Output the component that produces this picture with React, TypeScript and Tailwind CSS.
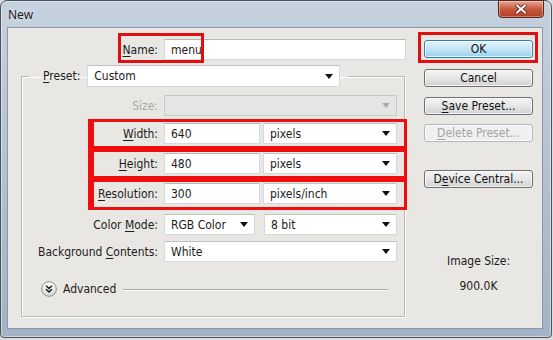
const font = "font-['DejaVu_Sans_Condensed','DejaVu_Sans',sans-serif]";

const Arrow = ({ disabled }: { disabled?: boolean }) => (
  <svg width="8" height="5" viewBox="0 0 8 5" className="flex-shrink-0">
    <path d="M0 0h8L4 5z" fill={disabled ? '#a9a9a9' : '#111'} />
  </svg>
);

function TextBox({ value, className = '' }: { value: string; className?: string }) {
  return (
    <div
      className={`h-[21px] bg-white border border-[#d5d8dc] border-t-[#b5b8bd] flex items-center pl-[6px] ${className}`}
    >
      {value}
    </div>
  );
}

function Select({
  value,
  className = '',
  disabled,
}: {
  value?: string;
  className?: string;
  disabled?: boolean;
}) {
  return (
    <div
      className={`h-[21px] border flex items-center justify-between pl-[6px] pr-[6px] ${
        disabled ? 'bg-[#e6e5e3] border-[#c9c9c9]' : 'bg-white border-[#d5d8dc] border-t-[#bfc2c6]'
      } ${className}`}
    >
      <span>{value}</span>
      <Arrow disabled={disabled} />
    </div>
  );
}

function Label({ children, className = '' }: { children: React.ReactNode; className?: string }) {
  return <div className={`text-right whitespace-nowrap ${className}`}>{children}</div>;
}

function Button({
  children,
  primary,
  disabled,
  className = '',
}: {
  children: React.ReactNode;
  primary?: boolean;
  disabled?: boolean;
  className?: string;
}) {
  const look = primary
    ? 'border-[#3c7fb1] bg-gradient-to-b from-[#e5f4fc] via-[#c4e5f6] to-[#98d1ef] text-[#111]'
    : disabled
      ? 'border-[#b4b8bc] bg-[#f0f0f0] text-[#a3a3a3]'
      : 'border-[#707070] bg-gradient-to-b from-[#f4f4f4] via-[#e6e6e6] to-[#d2d2d2] text-[#111]';
  return (
    <div
      className={`h-[18px] rounded-[3px] border flex items-center justify-center shadow-[inset_0_0_0_1px_rgba(255,255,255,0.7)] ${look} ${className}`}
    >
      {children}
    </div>
  );
}

const U = ({ c }: { c: string }) => <span className="underline underline-offset-2">{c}</span>;

function AdvancedIcon() {
  return (
    <svg width="16" height="16" viewBox="0 0 16 16" className="flex-shrink-0">
      <defs>
        <linearGradient id="adv" x1="0" y1="0" x2="0" y2="1">
          <stop offset="0" stopColor="#ffffff" />
          <stop offset="1" stopColor="#d8d8d8" />
        </linearGradient>
      </defs>
      <circle cx="8" cy="8" r="7.3" fill="url(#adv)" stroke="#8c8c8c" strokeWidth="1" />
      <path d="M5 4.8l3 2.6 3-2.6M5 8.3l3 2.6 3-2.6" fill="none" stroke="#222" strokeWidth="1.5" />
    </svg>
  );
}

export default function App() {
  return (
    <div className={`w-[553px] h-[340px] bg-[#dcdcdc] text-[12px] text-[#1b1b1b] ${font}`}>
      <div className="w-[552px] h-[338px] rounded-t-[7px] rounded-b-[4px] border border-[#46525f] bg-gradient-to-b from-[#c6d1de] via-[#b4c1d1] to-[#a3b2c4] flex flex-col shadow-[inset_0_0_0_1px_rgba(255,255,255,0.45)]">
        {/* title bar */}
        <div className="h-[26px] flex items-start justify-between relative">
          <div className="pl-[7px] pt-[5px] text-[12px] text-[#1e1e1e] font-['Noto_Sans',sans-serif] [text-shadow:0_0_8px_#ffffff]">
            New
          </div>
          <div className="mr-[7px] -mt-px w-[46px] h-[18px] rounded-b-[4px] border border-[#5a2418] bg-gradient-to-b from-[#e6a594] via-[#c75a3e] to-[#b33e22] flex items-center justify-center shadow-[inset_0_0_0_1px_rgba(255,255,255,0.35)]">
            <svg width="12" height="10" viewBox="0 0 12 10">
              <path d="M2 1.5l8 7M10 1.5l-8 7" stroke="#4a1a10" strokeWidth="3.4" strokeLinecap="square" />
              <path d="M2 1.5l8 7M10 1.5l-8 7" stroke="#ffffff" strokeWidth="2" strokeLinecap="square" />
            </svg>
          </div>
        </div>

        {/* client area */}
        <div className="relative ml-[6px] mr-[8px] w-[536px] h-[302px] bg-[#e9e7e4] border border-[#8b98a8] flex pt-[11px]">
          {/* left form */}
          <div className="w-[398px] flex flex-col">
            <div className="h-[21px] flex items-center">
              <Label className="w-[150px]">
                <U c="N" />ame:
              </Label>
              <TextBox value="menu" className="ml-[6px] flex-1" />
            </div>

            <fieldset className="mt-[5px] ml-[13px] w-[384px] border border-[#b9b7b4] shadow-[inset_1px_1px_0_#ffffff,1px_1px_0_#ffffff] pb-[19px]">
              <legend className="ml-[7px] pl-[14px] pr-[8px] flex items-center">
                <span>
                  <U c="P" />reset:
                </span>
                <Select value="Custom" className="ml-[7px] w-[253px] h-[22px]" />
              </legend>

              <div className="mt-[8px] flex items-center">
                <Label className="w-[136px] text-[#a8a8a8]">Size:</Label>
                <Select disabled className="ml-[6px] w-[233px]" />
              </div>

              <div className="mt-[7px] flex items-center">
                <Label className="w-[136px]">
                  <U c="W" />idth:
                </Label>
                <TextBox value="640" className="ml-[6px] w-[96px]" />
                <Select value="pixels" className="ml-[3px] w-[134px]" />
              </div>

              <div className="mt-[9px] flex items-center">
                <Label className="w-[136px]">
                  <U c="H" />eight:
                </Label>
                <TextBox value="480" className="ml-[6px] w-[96px]" />
                <Select value="pixels" className="ml-[3px] w-[134px]" />
              </div>

              <div className="mt-[9px] flex items-center">
                <Label className="w-[136px]">
                  <U c="R" />esolution:
                </Label>
                <TextBox value="300" className="ml-[6px] w-[96px]" />
                <Select value="pixels/inch" className="ml-[3px] w-[134px]" />
              </div>

              <div className="mt-[10px] flex items-center">
                <Label className="w-[136px]">
                  Color <U c="M" />ode:
                </Label>
                <Select value="RGB Color" className="ml-[6px] w-[91px]" />
                <Select value="8 bit" className="ml-[9px] w-[133px]" />
              </div>

              <div className="mt-[6px] flex items-center">
                <Label className="w-[136px]">
                  Background <U c="C" />ontents:
                </Label>
                <Select value="White" className="ml-[6px] w-[233px]" />
              </div>

              <div className="mt-[19px] h-[16px] pl-[19px] pr-[16px] flex items-center">
                <AdvancedIcon />
                <span className="ml-[6px]">Advanced</span>
                <div className="ml-[7px] flex-1 h-px bg-[#a9a7a4] shadow-[0_1px_0_#ffffff]" />
              </div>
            </fieldset>
          </div>

          {/* right buttons */}
          <div className="ml-[18px] w-[109px] flex flex-col">
            <Button primary className="mt-px">OK</Button>
            <Button className="mt-[11px]">Cancel</Button>
            <Button className="mt-[10px]">
              <U c="S" />ave Preset...
            </Button>
            <Button disabled className="mt-[9px]">
              <U c="D" />elete Preset...
            </Button>
            <Button className="mt-[28px]">
              D<U c="e" />vice Central...
            </Button>
            <div className="mt-[66px] text-center leading-[15px]">Image Size:</div>
            <div className="mt-[10px] text-center leading-[15px]">900.0K</div>
          </div>

          {/* red annotation boxes */}
          <div className="absolute left-[110px] top-[5px] w-[86px] h-[30px] border-[3px] border-[#e01010]" />
          <div className="absolute left-[410px] top-[4px] w-[120px] h-[31px] border-[3px] border-[#e01010]" />
          <div className="absolute left-[80px] top-[91px] w-[319px] h-[30px] border-[3px] border-l-[6px] border-[#ee0e0e]" />
          <div className="absolute left-[80px] top-[121px] w-[319px] h-[30px] border-[3px] border-l-[6px] border-[#ee0e0e]" />
          <div className="absolute left-[80px] top-[151px] w-[319px] h-[31px] border-[3px] border-l-[6px] border-[#ee0e0e]" />
        </div>
      </div>
    </div>
  );
}
